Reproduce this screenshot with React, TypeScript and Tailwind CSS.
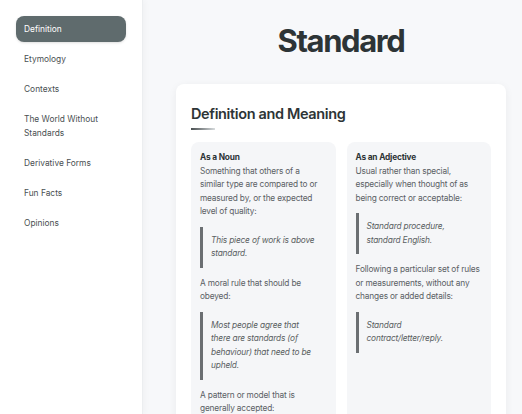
import type { ReactNode } from 'react'

const NAV = ['Definition', 'Etymology', 'Contexts', 'The World Without Standards', 'Derivative Forms', 'Fun Facts', 'Opinions']

function Quote({ children }: { children: ReactNode }) {
    return (
        <blockquote className="mt-[8px] mb-[9px] border-l-[3px] border-[#6b6f72] pl-[8px] py-[7px] italic text-[#5a5f62]">
            {children}
        </blockquote>
    )
}

function Meaning({ title, children }: { title: string; children: ReactNode }) {
    return (
        <div className="flex-1 rounded-lg bg-[#f5f6f8] px-[9px] pt-[9px] pb-6 text-[8.3px] leading-[13.5px] tracking-[-0.02em] whitespace-nowrap text-[#5a6064]">
            <h3 className="font-bold text-[#2d3436]">{title}</h3>
            {children}
        </div>
    )
}

export default function App() {
    return (
        <div className="flex h-[414px] w-[522px] overflow-hidden bg-[#f7f8fa]" style={{ fontFamily: 'Inter, "Liberation Sans", sans-serif' }}>
            {/* Sidebar */}
            <aside className="w-[143px] shrink-0 bg-white border-r border-[#eceef0] shadow-[2px_0_6px_rgba(0,0,0,0.03)] px-4 pt-4 flex flex-col gap-1">
                {NAV.map((item, i) => (
                    <div
                        key={item}
                        className={
                            i === 0
                                ? 'rounded-lg bg-[#5f6b6d] px-2 py-[6px] text-[8.4px] leading-[14px] text-white shadow-sm'
                                : 'rounded-lg px-2 py-[6px] text-[8.4px] leading-[14px] text-[#4a4f52]'
                        }
                    >
                        {item}
                    </div>
                ))}
            </aside>

            {/* Main */}
            <main className="flex-1 pl-[33px] pr-4">
                <h1 className="mt-[22px] text-center text-[31px] leading-[38px] font-bold tracking-[-0.045em] text-[#2d3436]">Standard</h1>

                <section className="mt-[24px] rounded-lg bg-white px-[15px] pt-[20px] shadow-[0_2px_8px_rgba(0,0,0,0.06)] h-[400px]">
                    <h2 className="text-[14.5px] leading-[20px] font-semibold tracking-[-0.025em] text-[#2d3436]">Definition and Meaning</h2>
                    <div className="mt-[4px] h-[2px] w-6 bg-gradient-to-r from-[#4a5052] to-[#d8dcde]" />

                    <div className="mt-[12px] flex gap-[11px]">
                        <Meaning title="As a Noun">
                            <p>Something that others of a<br />similar type are compared to or<br />measured by, or the expected<br />level of quality:</p>
                            <Quote>This piece of work is above<br />standard.</Quote>
                            <p>A moral rule that should be<br />obeyed:</p>
                            <Quote>Most people agree that<br />there are standards (of<br />behaviour) that need to be<br />upheld.</Quote>
                            <p>A pattern or model that is<br />generally accepted:</p>
                        </Meaning>
                        <Meaning title="As an Adjective">
                            <p>Usual rather than special,<br />especially when thought of as<br />being correct or acceptable:</p>
                            <Quote>Standard procedure,<br />standard English.</Quote>
                            <p>Following a particular set of rules<br />or measurements, without any<br />changes or added details:</p>
                            <Quote>Standard<br />contract/letter/reply.</Quote>
                        </Meaning>
                    </div>
                </section>
            </main>
        </div>
    )
}
